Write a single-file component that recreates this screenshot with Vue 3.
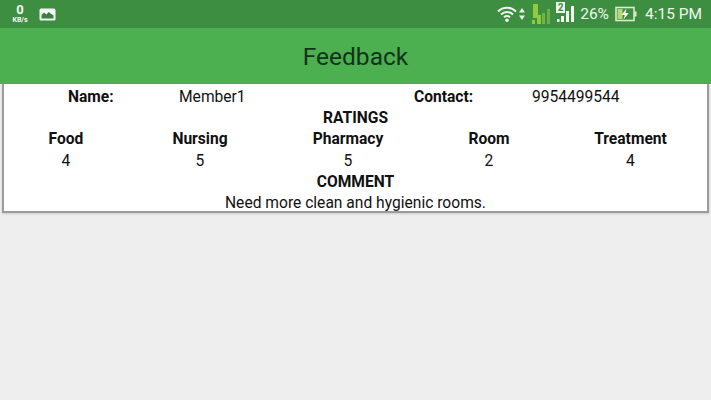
<template>
  <div class="screen">
    <div class="status-bar">
      <div class="net-speed">
        <span class="net-value">0</span>
        <span class="net-unit">KB/s</span>
      </div>
      <svg class="photo-icon" width="17" height="13" viewBox="0 0 17 13">
        <rect x="0.5" y="0.5" width="16" height="12" rx="1.5" fill="#f2f8f2" />
        <path d="M2.5 10.5 L2.5 7 L5 4.5 L7.5 6.5 L9.5 4 L14.5 7.5 L14.5 10.5 Z" fill="#3c7d40" />
      </svg>
      <div class="status-right">
        <svg class="wifi" width="20" height="18" viewBox="0 0 20 18">
          <path d="M1 6.5 C6 1.5 14 1.5 19 6.5" fill="none" stroke="#eef6ee" stroke-width="2" />
          <path d="M4 9.5 C7.5 6.2 12.5 6.2 16 9.5" fill="none" stroke="#eef6ee" stroke-width="2" />
          <path d="M7 12.2 C8.8 10.8 11.2 10.8 13 12.2" fill="none" stroke="#eef6ee" stroke-width="2" />
          <circle cx="10" cy="15.3" r="1.8" fill="#eef6ee" />
        </svg>
        <svg class="arrows" width="6" height="14" viewBox="0 0 6 14">
          <path d="M3 1 L6 5.5 L0 5.5 Z M3 13 L6 8.5 L0 8.5 Z" fill="#e6f1e6" />
        </svg>
        <svg class="sim-one" width="19" height="20" viewBox="0 0 19 20">
          <rect x="1" y="0" width="5" height="11" fill="#8fca3f" />
          <rect x="1" y="11" width="8" height="3" fill="#8fca3f" />
          <rect x="0" y="16" width="3" height="4" fill="#8fca3f" />
          <rect x="5" y="14" width="4" height="6" fill="#8fca3f" />
          <rect x="10" y="9" width="3" height="11" fill="#72b445" />
          <rect x="15" y="5" width="3" height="15" fill="#6cae47" />
        </svg>
        <svg class="sim-two" width="19" height="21" viewBox="0 0 19 21">
          <rect x="0" y="0" width="9" height="11" fill="#eef6ee" />
          <text x="4.5" y="9" text-anchor="middle" class="sim-num">2</text>
          <rect x="1" y="17" width="2.5" height="3" fill="#eef6ee" />
          <rect x="5" y="14" width="3" height="6" fill="#eef6ee" />
          <rect x="10" y="9" width="3" height="11" fill="#eef6ee" />
          <rect x="15" y="4" width="3" height="16" fill="#eef6ee" />
        </svg>
        <span class="percent">26%</span>
        <svg class="battery" width="22" height="16" viewBox="0 0 22 16">
          <rect x="1" y="1.5" width="18" height="13" fill="none" stroke="#dcebc8" stroke-width="1.6" />
          <rect x="2.5" y="3" width="5" height="10" fill="#b5d67a" />
          <rect x="19.5" y="5.5" width="2" height="5" fill="#dcebc8" />
          <path d="M11.5 2.5 L6.5 9 L9.8 9 L8.5 13.5 L13.8 7 L10.5 7 Z" fill="#f4f9ee" />
        </svg>
        <span class="clock">4:15 PM</span>
      </div>
    </div>

    <header class="app-bar">Feedback</header>

    <section class="card">
      <div class="member-row">
        <b>Name:</b>
        <span>{{ member.name }}</span>
        <b>Contact:</b>
        <span>{{ member.contact }}</span>
      </div>
      <div class="section-title">RATINGS</div>
      <div class="ratings">
        <b v-for="r in ratings" :key="r.label">{{ r.label }}</b>
        <span v-for="r in ratings" :key="r.label + '-v'">{{ r.value }}</span>
      </div>
      <div class="section-title">COMMENT</div>
      <div class="comment">{{ comment }}</div>
    </section>
  </div>
</template>

<script setup>
const member = { name: 'Member1', contact: '9954499544' }

const ratings = [
  { label: 'Food', value: 4 },
  { label: 'Nursing', value: 5 },
  { label: 'Pharmacy', value: 5 },
  { label: 'Room', value: 2 },
  { label: 'Treatment', value: 4 }
]

const comment = 'Need more clean and hygienic rooms.'
</script>

<style>
html,
body {
  margin: 0;
  background: #eeeeee;
}
</style>

<style scoped>
.screen {
  width: 711px;
  height: 400px;
  overflow: hidden;
  background: #eeeeee;
  font-family: Roboto, sans-serif;
  color: #111;
}

.status-bar {
  height: 28px;
  display: flex;
  align-items: center;
  padding: 0 9px 0 10px;
  background: #3e8e41;
  color: #eef6ee;
}

.net-speed {
  width: 20px;
  display: flex;
  flex-direction: column;
  align-items: center;
  font-weight: 700;
  color: #f2f8f2;
}

.net-value {
  font-size: 13px;
  line-height: 12px;
}

.net-unit {
  font-size: 7px;
  line-height: 7px;
  padding-top: 1px;
}

.photo-icon {
  margin-left: 9px;
}

.status-right {
  margin-left: auto;
  display: flex;
  align-items: center;
}

.arrows {
  margin-left: 2px;
}

.sim-one {
  margin-left: 7px;
}

.sim-two {
  margin-left: 5px;
  margin-top: -3px;
}

.sim-num {
  font-size: 10px;
  font-weight: 700;
  fill: #3e8e41;
}

.percent {
  margin-left: 5px;
  font-size: 15.5px;
}

.battery {
  margin-left: 6px;
}

.clock {
  margin-left: 8px;
  font-size: 15.5px;
}

.app-bar {
  height: 56px;
  display: flex;
  align-items: center;
  justify-content: center;
  background: #4caf50;
  font-size: 24.5px;
  color: #12331a;
}

.card {
  margin: 0 2px;
  height: 129px;
  box-sizing: border-box;
  background: #fff;
  font-size: 15.6px;
  line-height: 21.2px;
  border: 2px solid #9c9c9c;
  border-top: 0;
  box-shadow: 0 1px 2px rgba(0, 0, 0, 0.15);
  padding-top: 3px;
}

.member-row {
  display: grid;
  grid-template-columns: 111px 235px 118px 1fr;
  padding-left: 64px;
}

.section-title {
  text-align: center;
  font-weight: 700;
}

.ratings {
  display: grid;
  grid-template-columns: 124px 144px 152px 130px 153px;
  text-align: center;
}

.comment {
  text-align: center;
}
</style>
